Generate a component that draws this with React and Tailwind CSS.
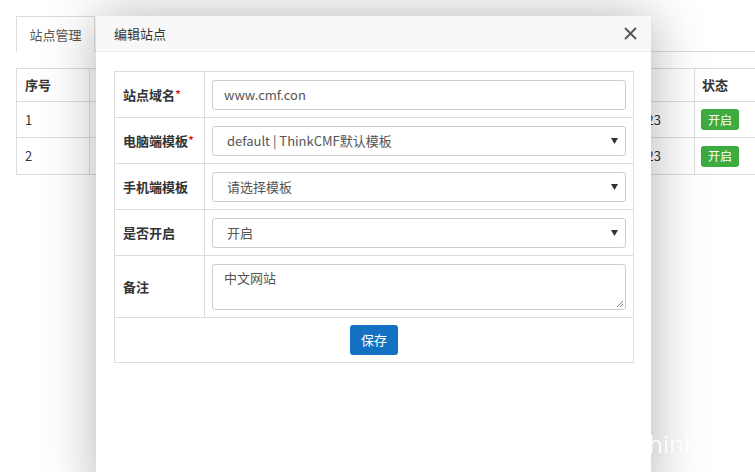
import React from 'react';

const font = { fontFamily: '"Noto Sans CJK SC", "Noto Sans", sans-serif' };

const rows = [
  { label: '站点域名', required: true, type: 'input', value: 'www.cmf.con' },
  { label: '电脑端模板', required: true, type: 'select', value: 'default | ThinkCMF默认模板' },
  { label: '手机端模板', type: 'select', value: '请选择模板' },
  { label: '是否开启', type: 'select', value: '开启' },
];

const Field = ({ row }) => {
  if (row.type === 'input') {
    return (
      <div className="h-[30px] border border-[#ccc] rounded-[3px] px-[11px] flex items-center text-[13px] text-[#555]">
        {row.value}
      </div>
    );
  }
  return (
    <div className="h-[30px] border border-[#ccc] rounded-[3px] pl-[14px] pr-[6px] flex items-center justify-between text-[13px] text-[#555]">
      <span>{row.value}</span>
      <svg width="7" height="6" viewBox="0 0 7 6" className="mr-[1px]">
        <path d="M0 0 H7 L3.5 6 Z" fill="#333" />
      </svg>
    </div>
  );
};

export default function App() {
  return (
    <div className="relative w-[755px] h-[472px] overflow-hidden bg-white text-[#333]" style={font}>
      {/* page behind */}
      <div className="pt-4 pl-4">
        <div className="flex items-end">
          <div className="w-[79px] h-[36px] border border-[#ddd] border-b-0 flex items-center justify-center text-[13px] text-[#555]">
            站点管理
          </div>
          <div className="flex-1 border-b border-[#ddd]" />
        </div>
        <div className="mt-4 border border-[#ddd] border-r-0 text-[13px]">
          <div className="flex h-[33px] border-b border-[#ddd] font-bold">
            <div className="w-[73px] border-r border-[#ddd] pl-2 flex items-center">序号</div>
            <div className="flex-1 border-r border-[#ddd]" />
            <div className="w-[60px] pl-[7px] flex items-center">状态</div>
          </div>
          {['1', '2'].map((n, i) => (
            <div key={n} className={`flex h-[36px] ${i === 0 ? 'border-b border-[#ddd]' : ''}`}>
              <div className="w-[73px] border-r border-[#ddd] pl-2 flex items-center">{n}</div>
              <div className="flex-1 border-r border-[#ddd] flex items-center justify-end pr-[33px]">2017-11-23</div>
              <div className="w-[60px] pl-[6px] flex items-center">
                <span className="bg-[#3dab3f] text-white text-[12px] rounded-[3px] px-[7px] h-[21px] flex items-center">开启</span>
              </div>
            </div>
          ))}
        </div>
      </div>

      {/* dialog */}
      <div className="absolute left-[96px] top-4 w-[555px] h-[480px] bg-white shadow-[1px_1px_50px_rgba(0,0,0,0.3)]">
        <div className="h-[36px] bg-[#f8f8f8] border-b border-[#eee] flex items-center justify-between pl-[18px] pr-[14px] text-[13px] text-[#333]">
          <span>编辑站点</span>
          <svg width="13" height="13" viewBox="0 0 13 13" stroke="#555" strokeWidth="1.8" strokeLinecap="round">
            <path d="M1.5 1.5 L11.5 11.5 M11.5 1.5 L1.5 11.5" />
          </svg>
        </div>
        <div className="pt-[19px] pl-[18px] pr-[17px]">
          <div className="border border-[#ddd] text-[13px]">
            {rows.map((row) => (
              <div key={row.label} className="flex border-b border-[#ddd]">
                <div className="w-[90px] border-r border-[#ddd] pl-2 flex items-center font-bold">
                  {row.label}
                  {row.required && <span className="text-[#c00] font-normal">*</span>}
                </div>
                <div className="flex-1 px-[7px] pt-2 pb-[7px]">
                  <Field row={row} />
                </div>
              </div>
            ))}
            <div className="flex border-b border-[#ddd]">
              <div className="w-[90px] border-r border-[#ddd] pl-2 flex items-center font-bold">备注</div>
              <div className="flex-1 px-[7px] pt-2 pb-[7px]">
                <div className="relative h-[46px] border border-[#ccc] rounded-[3px] px-[11px] pt-[3px] text-[13px] text-[#555]">
                  中文网站
                  <svg className="absolute right-[1px] bottom-[1px]" width="8" height="8" viewBox="0 0 8 8" stroke="#888" strokeWidth="1">
                    <path d="M1 7 L7 1 M4 7 L7 4" />
                  </svg>
                </div>
              </div>
            </div>
            <div className="h-[44px] flex items-center justify-center">
              <button className="h-[30px] w-[48px] rounded-[3px] bg-[#1471c1] text-white text-[13px]">保存</button>
            </div>
          </div>
        </div>
      </div>

      <div className="absolute left-[635px] top-[426px] text-[24px] text-white opacity-90" style={{ fontFamily: '"Open Sans", sans-serif' }}>
        ThinkCMF
      </div>
    </div>
  );
}
